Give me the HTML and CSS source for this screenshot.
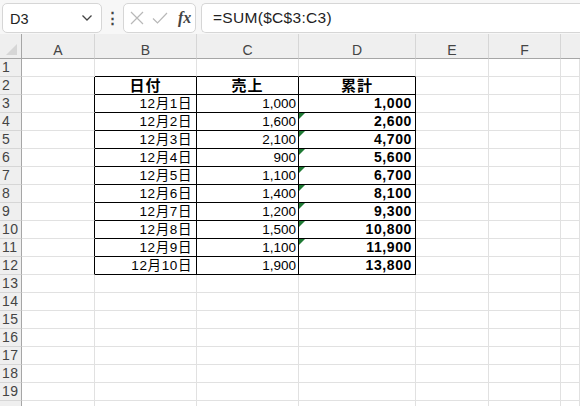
FILE: index.html
```html
<!DOCTYPE html>
<html lang="ja">
<head>
<meta charset="utf-8">
<link rel="stylesheet" href="styles.css">
</head>
<body>
<div class="topbar">
  <div class="namebox"><span class="ref">D3</span>
    <svg class="chev" width="12" height="8" viewBox="0 0 12 8"><path d="M1.5 1.5 L6 6 L10.5 1.5" fill="none" stroke="#444" stroke-width="1.3"/></svg>
  </div>
  <div class="dots">&#8942;</div>
  <div class="fxbox">
    <svg width="14" height="14" viewBox="0 0 14 14"><path d="M1 1 L13 13 M13 1 L1 13" stroke="#b8b8b8" stroke-width="1.2" fill="none"/></svg>
    <svg width="16" height="14" viewBox="0 0 16 14"><path d="M1 7.5 L5.5 12 L15 2" stroke="#b8b8b8" stroke-width="1.2" fill="none"/></svg>
    <span class="fx">fx</span>
  </div>
  <div class="formula">=SUM($C$3:C3)</div>
</div>
<div class="sheet">
  <div class="corner"></div><div class="ch">A</div><div class="ch">B</div><div class="ch">C</div><div class="ch">D</div><div class="ch">E</div><div class="ch">F</div><div class="ch last"></div>

  <div class="rh">1</div><div class="c"></div><div class="c tb"></div><div class="c tb"></div><div class="c tb"></div><div class="c"></div><div class="c"></div><div class="c"></div>
  <div class="rh">2</div><div class="c tr"></div><div class="c t hd">日付</div><div class="c t hd">売上</div><div class="c t hd">累計</div><div class="c"></div><div class="c"></div><div class="c"></div>
  <div class="rh">3</div><div class="c tr"></div><div class="c t r d">12月1日</div><div class="c t r">1,000</div><div class="c t r b">1,000</div><div class="c"></div><div class="c"></div><div class="c"></div>
  <div class="rh">4</div><div class="c tr"></div><div class="c t r d">12月2日</div><div class="c t r">1,600</div><div class="c t r b flag">2,600</div><div class="c"></div><div class="c"></div><div class="c"></div>
  <div class="rh">5</div><div class="c tr"></div><div class="c t r d">12月3日</div><div class="c t r">2,100</div><div class="c t r b flag">4,700</div><div class="c"></div><div class="c"></div><div class="c"></div>
  <div class="rh">6</div><div class="c tr"></div><div class="c t r d">12月4日</div><div class="c t r">900</div><div class="c t r b flag">5,600</div><div class="c"></div><div class="c"></div><div class="c"></div>
  <div class="rh">7</div><div class="c tr"></div><div class="c t r d">12月5日</div><div class="c t r">1,100</div><div class="c t r b flag">6,700</div><div class="c"></div><div class="c"></div><div class="c"></div>
  <div class="rh">8</div><div class="c tr"></div><div class="c t r d">12月6日</div><div class="c t r">1,400</div><div class="c t r b flag">8,100</div><div class="c"></div><div class="c"></div><div class="c"></div>
  <div class="rh">9</div><div class="c tr"></div><div class="c t r d">12月7日</div><div class="c t r">1,200</div><div class="c t r b flag">9,300</div><div class="c"></div><div class="c"></div><div class="c"></div>
  <div class="rh">10</div><div class="c tr"></div><div class="c t r d">12月8日</div><div class="c t r">1,500</div><div class="c t r b flag">10,800</div><div class="c"></div><div class="c"></div><div class="c"></div>
  <div class="rh">11</div><div class="c tr"></div><div class="c t r d">12月9日</div><div class="c t r">1,100</div><div class="c t r b flag">11,900</div><div class="c"></div><div class="c"></div><div class="c"></div>
  <div class="rh">12</div><div class="c tr"></div><div class="c t r d">12月10日</div><div class="c t r">1,900</div><div class="c t r b">13,800</div><div class="c"></div><div class="c"></div><div class="c"></div>
  <div class="rh">13</div><div class="c"></div><div class="c"></div><div class="c"></div><div class="c"></div><div class="c"></div><div class="c"></div><div class="c"></div>
  <div class="rh">14</div><div class="c"></div><div class="c"></div><div class="c"></div><div class="c"></div><div class="c"></div><div class="c"></div><div class="c"></div>
  <div class="rh">15</div><div class="c"></div><div class="c"></div><div class="c"></div><div class="c"></div><div class="c"></div><div class="c"></div><div class="c"></div>
  <div class="rh">16</div><div class="c"></div><div class="c"></div><div class="c"></div><div class="c"></div><div class="c"></div><div class="c"></div><div class="c"></div>
  <div class="rh">17</div><div class="c"></div><div class="c"></div><div class="c"></div><div class="c"></div><div class="c"></div><div class="c"></div><div class="c"></div>
  <div class="rh">18</div><div class="c"></div><div class="c"></div><div class="c"></div><div class="c"></div><div class="c"></div><div class="c"></div><div class="c"></div>
  <div class="rh">19</div><div class="c"></div><div class="c"></div><div class="c"></div><div class="c"></div><div class="c"></div><div class="c"></div><div class="c"></div>
  <div class="rh"></div><div class="c"></div><div class="c"></div><div class="c"></div><div class="c"></div><div class="c"></div><div class="c"></div><div class="c"></div>
</div>
</body>
</html>
```

FILE: styles.css
```css
* { box-sizing: border-box; }
html, body { margin: 0; padding: 0; }
body {
  width: 580px;
  height: 406px;
  overflow: hidden;
  background: #ffffff;
  font-family: "Liberation Sans", "Noto Sans CJK JP", sans-serif;
  color: #000;
}
.topbar {
  height: 34px;
  display: flex;
  align-items: flex-start;
  padding: 3px 0 0 2px;
  background: #f7f7f7;
}
.namebox {
  width: 100px;
  height: 30px;
  background: #fff;
  border: 1px solid #d6d6d6;
  border-radius: 5px;
  display: flex;
  align-items: center;
  justify-content: space-between;
  padding: 0 8px 0 7px;
  font-size: 14.5px;
  color: #222;
}
.ref { padding-top: 2px; }
.dots {
  width: 21px;
  text-align: center;
  font-size: 15px;
  line-height: 30px;
  color: #444;
  font-weight: bold;
}
.fxbox {
  width: 73px;
  height: 30px;
  background: #fff;
  border: 1px solid #d6d6d6;
  border-radius: 5px;
  display: flex;
  align-items: center;
  padding: 0 0 0 6px;
  gap: 8px;
}
.fx {
  font-family: "Liberation Serif", "DejaVu Serif", serif;
  font-style: italic;
  font-weight: bold;
  font-size: 16px;
  color: #444;
  margin-left: 2px;
}
.formula {
  flex: 1;
  margin-left: 5px;
  height: 30px;
  background: #fff;
  border: 1px solid #d6d6d6;
  border-right: none;
  border-radius: 5px 0 0 5px;
  font-size: 15.5px;
  letter-spacing: 0.3px;
  line-height: 28px;
  padding-left: 11px;
  color: #222;
}
.sheet {
  display: grid;
  grid-template-columns: 22px 73px 102px 102px 117px 73px 72px 1fr;
  grid-template-rows: 25px;
  grid-auto-rows: 18px;
}
.corner {
  background: #efefef;
  border-right: 1px solid #a6a6a6;
  border-bottom: 1px solid #a6a6a6;
  position: relative;
}
.corner::after {
  content: "";
  position: absolute;
  right: 4px;
  bottom: 3px;
  border-style: solid;
  border-width: 0 0 11px 11px;
  border-color: transparent transparent #d6d6d6 transparent;
}
.ch {
  background: #efefef;
  border-right: 1px solid #d6d6d6;
  border-bottom: 1px solid #a6a6a6;
  text-align: center;
  font-size: 14px;
  color: #444;
  line-height: 14px;
  padding-top: 9px;
}
.ch.last { border-right: none; }
.rh {
  background: #efefef;
  border-right: 1px solid #a6a6a6;
  border-bottom: 1px solid #d6d6d6;
  font-size: 14px;
  color: #444;
  line-height: 17px;
  padding-left: 2px;
  letter-spacing: 0.5px;
}
.c {
  border-right: 1px solid #e1e1e1;
  border-bottom: 1px solid #e1e1e1;
  font-size: 13.5px;
  line-height: 17px;
  white-space: nowrap;
  position: relative;
}
.c.tb { border-bottom-color: #000; }
.c.tr { border-right-color: #000; }
.c.t { border-right-color: #000; border-bottom-color: #000; }
.c.hd { text-align: center; font-weight: bold; font-size: 15px; letter-spacing: 1px; }
.c.r { text-align: right; padding-right: 2px; }
.c.d { letter-spacing: 0.6px; padding-right: 4px; }
.c.b { font-weight: bold; font-size: 14px; letter-spacing: 0.6px; padding-right: 3px; }
.c.flag::before {
  content: "";
  position: absolute;
  left: 0;
  top: 0;
  border-style: solid;
  border-width: 6px 6px 0 0;
  border-color: #1f7a34 transparent transparent transparent;
}
```
